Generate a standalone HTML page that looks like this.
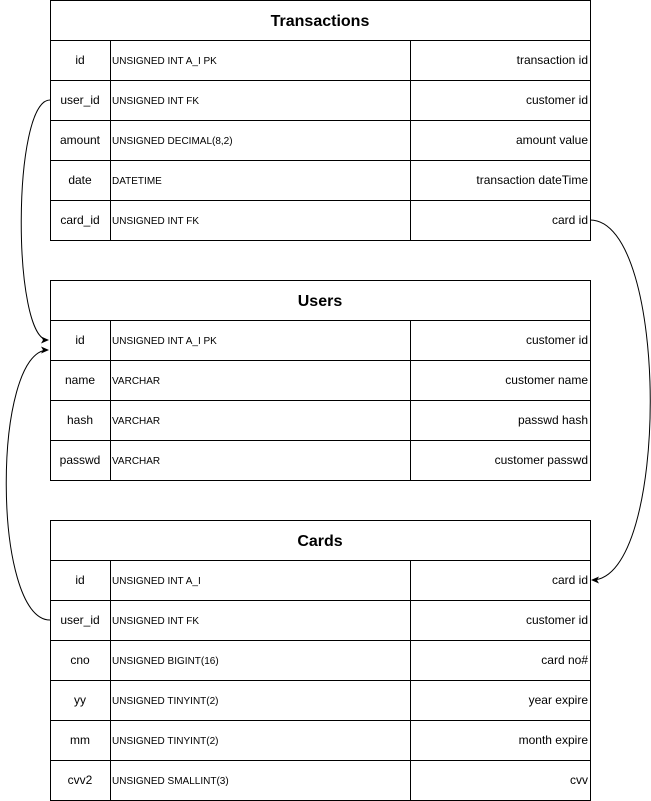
<!DOCTYPE html><html><head><style>body{margin:0;background:#fff}svg{display:block}</style></head><body>
<svg width="651" height="801" xmlns="http://www.w3.org/2000/svg" font-family="Liberation Sans, sans-serif">
<defs><marker id="a" markerWidth="8" markerHeight="8" refX="7" refY="4" orient="auto" markerUnits="userSpaceOnUse"><path d="M0,0.5 L8,4 L0,7.5 L2,4 Z" fill="#000"/></marker></defs>
<g fill="none" stroke="#000" stroke-width="1">
<path d="M50,100 C12,100 12,340 48,340" marker-end="url(#a)"/>
<path d="M50,620 C-8,620 -8,350 48,350" marker-end="url(#a)"/>
<path d="M590,220 C670,220 670,580 592,580" marker-end="url(#a)"/>
</g>
<g stroke="#000" stroke-width="1" fill="none" shape-rendering="crispEdges">
<rect x="50.5" y="0.5" width="540" height="240"/>
<line x1="50" y1="40.5" x2="591" y2="40.5"/><line x1="50" y1="80.5" x2="591" y2="80.5"/><line x1="50" y1="120.5" x2="591" y2="120.5"/><line x1="50" y1="160.5" x2="591" y2="160.5"/><line x1="50" y1="200.5" x2="591" y2="200.5"/>
<line x1="110.5" y1="40" x2="110.5" y2="240"/><line x1="410.5" y1="40" x2="410.5" y2="240"/>
<rect x="50.5" y="280.5" width="540" height="200"/>
<line x1="50" y1="320.5" x2="591" y2="320.5"/><line x1="50" y1="360.5" x2="591" y2="360.5"/><line x1="50" y1="400.5" x2="591" y2="400.5"/><line x1="50" y1="440.5" x2="591" y2="440.5"/>
<line x1="110.5" y1="320" x2="110.5" y2="480"/><line x1="410.5" y1="320" x2="410.5" y2="480"/>
<rect x="50.5" y="520.5" width="540" height="280"/>
<line x1="50" y1="560.5" x2="591" y2="560.5"/><line x1="50" y1="600.5" x2="591" y2="600.5"/><line x1="50" y1="640.5" x2="591" y2="640.5"/><line x1="50" y1="680.5" x2="591" y2="680.5"/><line x1="50" y1="720.5" x2="591" y2="720.5"/><line x1="50" y1="760.5" x2="591" y2="760.5"/>
<line x1="110.5" y1="560" x2="110.5" y2="800"/><line x1="410.5" y1="560" x2="410.5" y2="800"/>
</g>
<g font-weight="bold" font-size="16" text-anchor="middle" fill="#000">
<text x="320" y="26">Transactions</text><text x="320" y="306">Users</text><text x="320" y="546">Cards</text>
</g>
<g font-size="12" text-anchor="middle" fill="#000">
<text x="80" y="64">id</text><text x="80" y="104">user_id</text><text x="80" y="144">amount</text><text x="80" y="184">date</text><text x="80" y="224">card_id</text>
<text x="80" y="344">id</text><text x="80" y="384">name</text><text x="80" y="424">hash</text><text x="80" y="464">passwd</text>
<text x="80" y="584">id</text><text x="80" y="624">user_id</text><text x="80" y="664">cno</text><text x="80" y="704">yy</text><text x="80" y="744">mm</text><text x="80" y="784">cvv2</text>
</g>
<g font-size="10" fill="#000">
<text x="112" y="64">UNSIGNED INT A_I PK</text><text x="112" y="104">UNSIGNED INT FK</text><text x="112" y="144">UNSIGNED DECIMAL(8,2)</text><text x="112" y="184">DATETIME</text><text x="112" y="224">UNSIGNED INT FK</text>
<text x="112" y="344">UNSIGNED INT A_I PK</text><text x="112" y="384">VARCHAR</text><text x="112" y="424">VARCHAR</text><text x="112" y="464">VARCHAR</text>
<text x="112" y="584">UNSIGNED INT A_I</text><text x="112" y="624">UNSIGNED INT FK</text><text x="112" y="664">UNSIGNED BIGINT(16)</text><text x="112" y="704">UNSIGNED TINYINT(2)</text><text x="112" y="744">UNSIGNED TINYINT(2)</text><text x="112" y="784">UNSIGNED SMALLINT(3)</text>
</g>
<g font-size="12" text-anchor="end" fill="#000">
<text x="588" y="64">transaction id</text><text x="588" y="104">customer id</text><text x="588" y="144">amount value</text><text x="588" y="184">transaction dateTime</text><text x="588" y="224">card id</text>
<text x="588" y="344">customer id</text><text x="588" y="384">customer name</text><text x="588" y="424">passwd hash</text><text x="588" y="464">customer passwd</text>
<text x="588" y="584">card id</text><text x="588" y="624">customer id</text><text x="588" y="664">card no#</text><text x="588" y="704">year expire</text><text x="588" y="744">month expire</text><text x="588" y="784">cvv</text>
</g>
</svg>
</body></html>
